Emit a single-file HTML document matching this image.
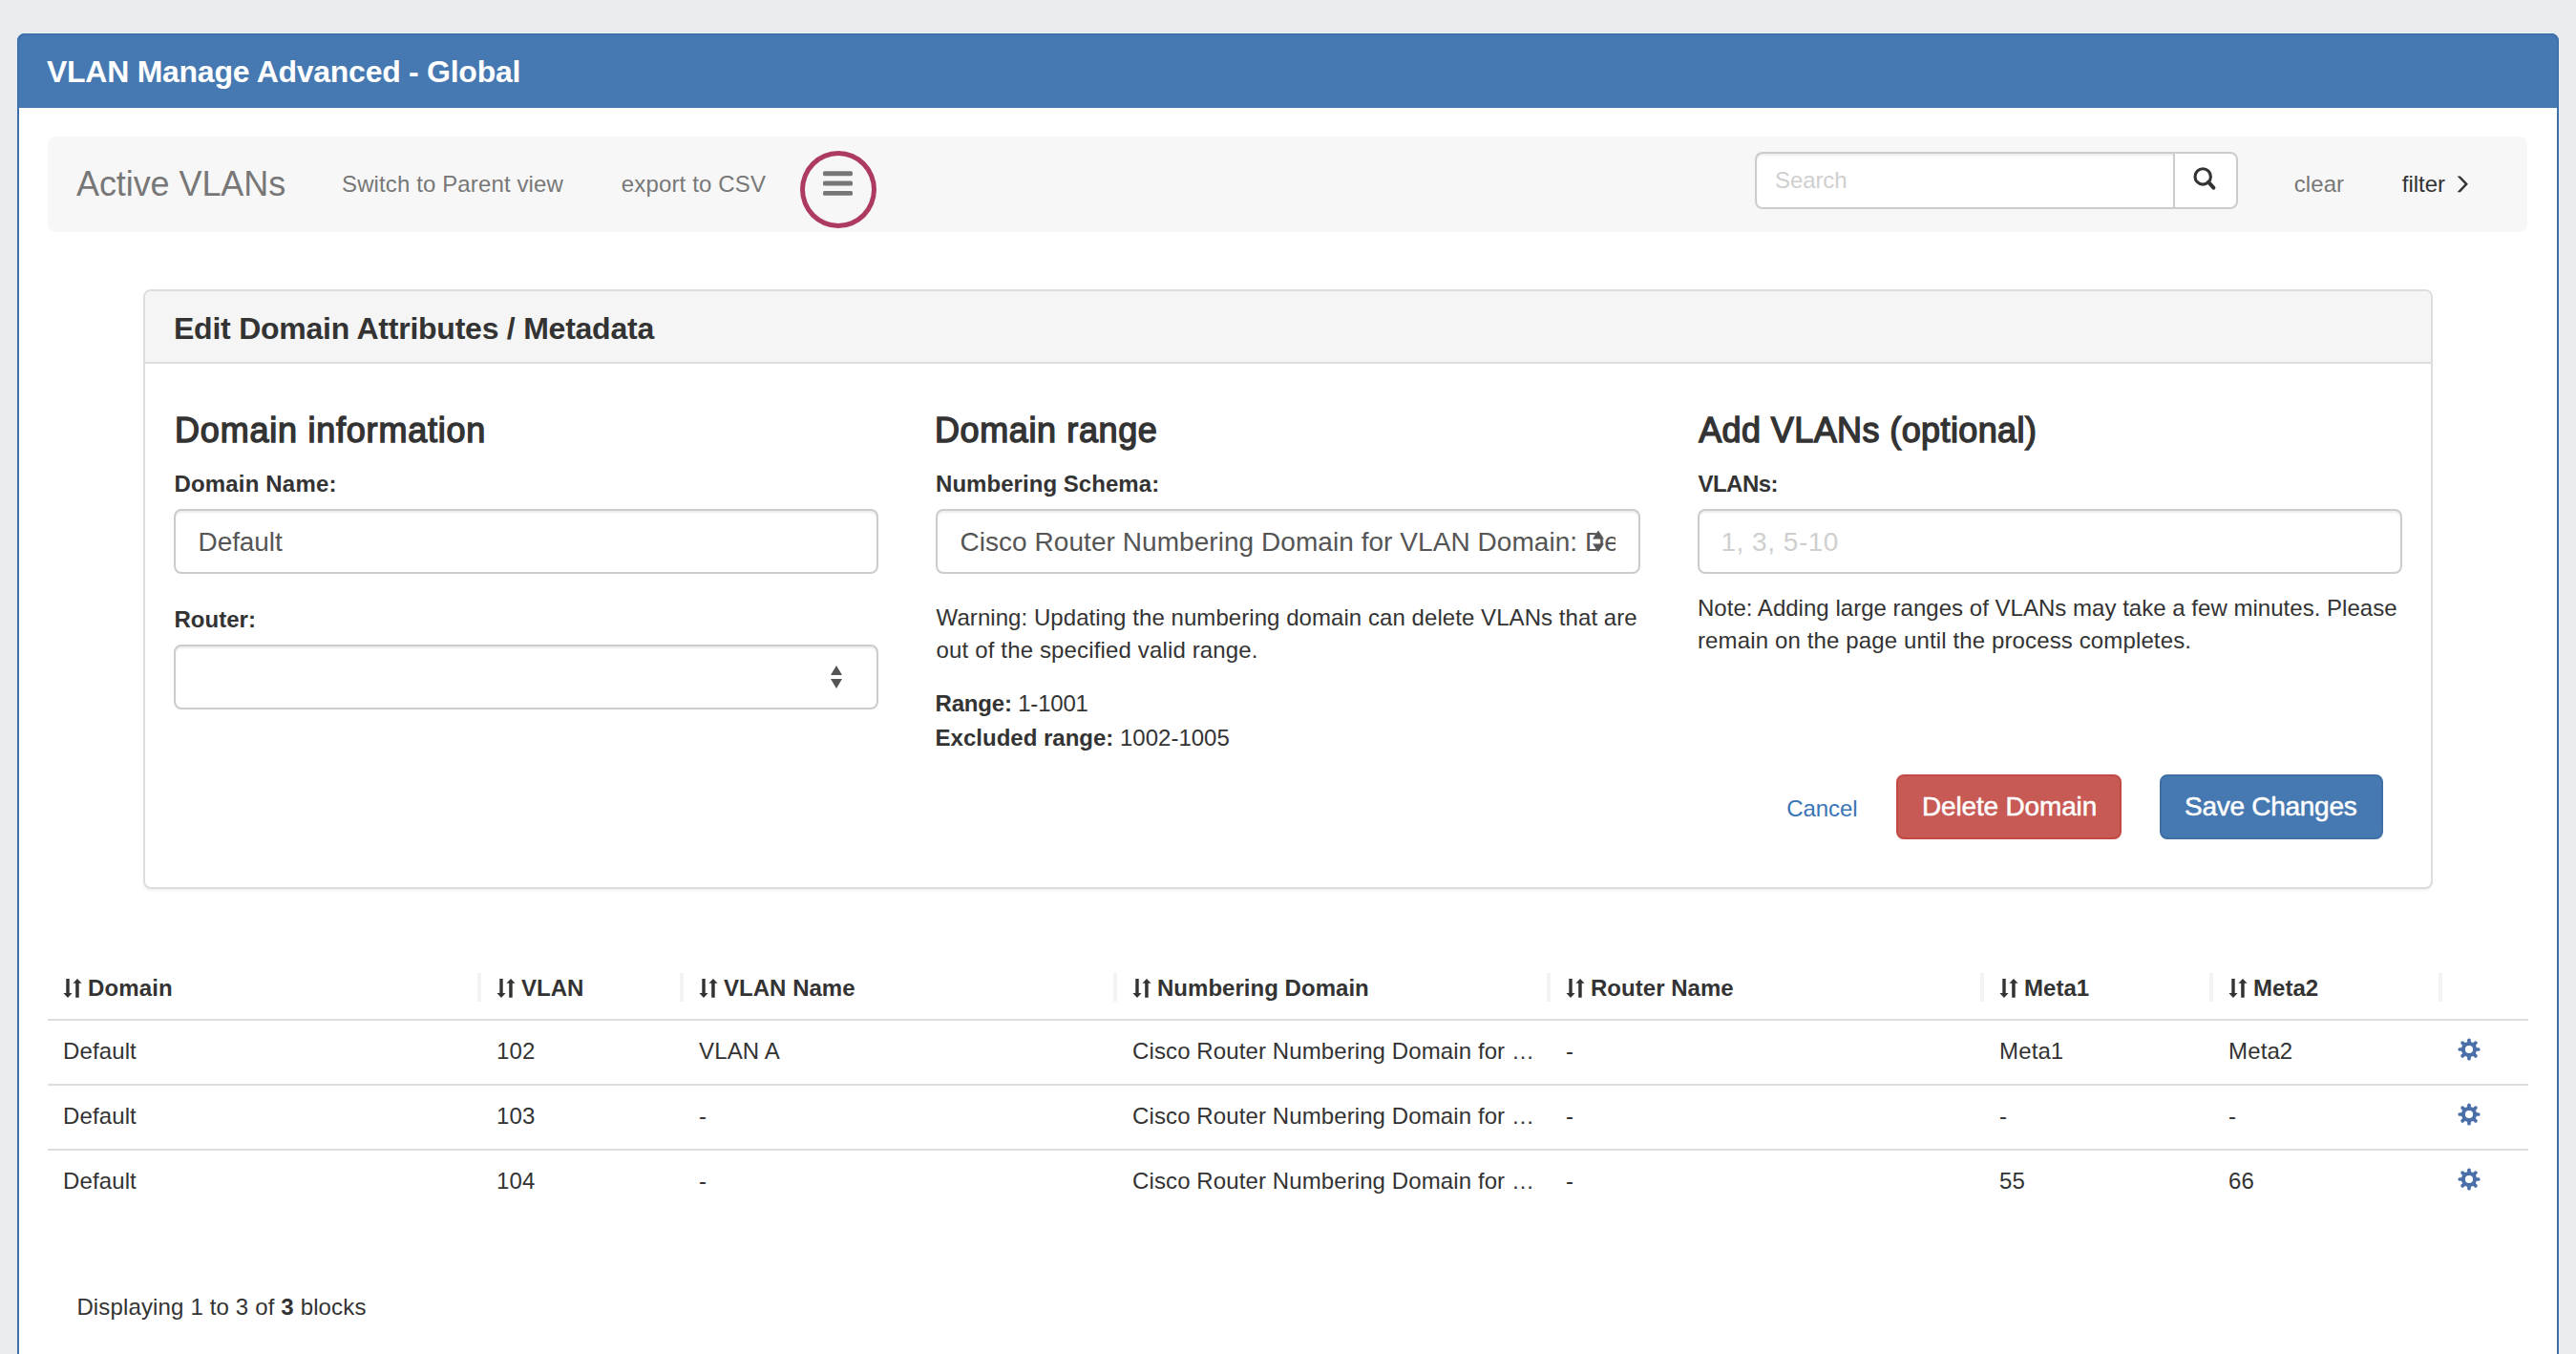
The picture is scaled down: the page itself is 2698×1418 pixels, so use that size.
<!DOCTYPE html>
<html>
<head>
<meta charset="utf-8">
<style>
*{box-sizing:border-box;margin:0;padding:0}
html,body{width:2698px;height:1418px;overflow:hidden}
body{background:#e9ecef;font-family:"Liberation Sans",sans-serif;color:#333;position:relative}
.a{position:absolute;white-space:nowrap}
.b{position:absolute}
b{font-weight:700}
</style>
</head>
<body>
<div class="b" style="left:18px;top:35px;width:2662px;height:1465px;background:#fff;border:2px solid #3e70ab;border-radius:8px;"></div>
<div class="b" style="left:18px;top:35px;width:2662px;height:78px;background:#4679b2;border:2px solid #3e70ab;border-bottom:none;border-radius:8px 8px 0 0;"></div>
<div id="title" class="a" style="left:49.00px;top:56.31px;font-size:32px;line-height:38px;font-weight:700;color:#fff;letter-spacing:-0.266px;">VLAN Manage Advanced - Global</div>
<div class="b" style="left:50px;top:143px;width:2597px;height:100px;background:#f7f7f7;border-radius:8px;"></div>
<div id="active" class="a" style="left:80.00px;top:171.03px;font-size:36px;line-height:43px;color:#777;letter-spacing:-0.079px;">Active VLANs</div>
<div id="switch" class="a" style="left:358.00px;top:178.18px;font-size:24px;line-height:29px;color:#777;letter-spacing:0.120px;">Switch to Parent view</div>
<div id="export" class="a" style="left:650.80px;top:177.78px;font-size:24px;line-height:29px;color:#777;letter-spacing:0.145px;">export to CSV</div>
<div class="b" style="left:838px;top:158px;width:80px;height:81px;border:5px solid #ad3a5f;border-radius:50%;"></div>
<svg class="b" style="left:850px;top:170px" width="55" height="45" viewBox="0 0 55 45"><g fill="#777"><rect x="12" y="9.2" width="31" height="5" rx="1.6"/><rect x="12" y="19.5" width="31" height="5.1" rx="1.6"/><rect x="12" y="29.9" width="31" height="4.9" rx="1.6"/></g></svg>
<div class="b" style="left:1838px;top:159px;width:440px;height:60px;background:#fff;border:2px solid #ccc;border-right:none;border-radius:8px 0 0 8px;box-shadow:inset 0 2px 2px rgba(0,0,0,.075);"></div>
<div class="b" style="left:2276px;top:159px;width:68px;height:60px;background:#fff;border:2px solid #ccc;border-radius:0 8px 8px 0;"></div>
<div id="search" class="a" style="left:1859.00px;top:174.18px;font-size:24px;line-height:29px;color:#cfcfcf;letter-spacing:-0.100px;">Search</div>
<svg class="b" style="left:2294px;top:173px" width="30" height="30" viewBox="0 0 30 30"><circle cx="13.2" cy="11.9" r="8.2" fill="none" stroke="#333" stroke-width="3.1"/><path d="M19 17.7 L24.4 23.7" stroke="#333" stroke-width="4" stroke-linecap="round"/></svg>
<div id="clear" class="a" style="left:2402.80px;top:178.48px;font-size:24px;line-height:29px;color:#777;letter-spacing:0.070px;">clear</div>
<div id="filter" class="a" style="left:2515.80px;top:178.48px;font-size:24px;line-height:29px;letter-spacing:-0.040px;">filter</div>
<svg class="b" style="left:2560px;top:175px" width="40" height="35" viewBox="0 0 40 35"><path d="M13.6 9.6 H16.9 L24.9 17.8 L16.9 26.2 H13.6 L21.5 17.8 Z" fill="#333"/></svg>
<div class="b" style="left:150px;top:303px;width:2398px;height:628px;background:#fff;border:2px solid #ddd;border-radius:8px;box-shadow:0 2px 2px rgba(0,0,0,.05);"></div>
<div class="b" style="left:152px;top:305px;width:2394px;height:76px;background:#f5f5f5;border-bottom:2px solid #ddd;border-radius:6px 6px 0 0;"></div>
<div id="edit" class="a" style="left:182.00px;top:324.91px;font-size:32px;line-height:38px;font-weight:700;letter-spacing:-0.240px;">Edit Domain Attributes / Metadata</div>
<div id="h1" class="a" style="left:183.10px;top:428.83px;font-size:36px;line-height:43px;letter-spacing:0.767px;-webkit-text-stroke:1.4px #333;">Domain information</div>
<div id="h2" class="a" style="left:979.00px;top:428.83px;font-size:36px;line-height:43px;letter-spacing:0.610px;-webkit-text-stroke:1.4px #333;">Domain range</div>
<div id="h3" class="a" style="left:1779.20px;top:429.03px;font-size:36px;line-height:43px;letter-spacing:0.397px;-webkit-text-stroke:1.4px #333;">Add VLANs (optional)</div>
<div id="l1" class="a" style="left:182.40px;top:492.18px;font-size:24px;line-height:29px;font-weight:700;letter-spacing:0.183px;">Domain Name:</div>
<div id="l2" class="a" style="left:980.00px;top:492.18px;font-size:24px;line-height:29px;font-weight:700;letter-spacing:0.047px;">Numbering Schema:</div>
<div id="l3" class="a" style="left:1778.40px;top:492.18px;font-size:24px;line-height:29px;font-weight:700;letter-spacing:-0.500px;">VLANs:</div>
<div class="b" style="left:182px;top:533px;width:738px;height:68px;background:#fff;border:2px solid #ccc;border-radius:8px;box-shadow:inset 0 2px 2px rgba(0,0,0,.075);"></div>
<div class="b" style="left:980px;top:533px;width:738px;height:68px;background:#fff;border:2px solid #ccc;border-radius:8px;box-shadow:inset 0 2px 2px rgba(0,0,0,.075);"></div>
<div class="b" style="left:1778px;top:533px;width:738px;height:68px;background:#fff;border:2px solid #ccc;border-radius:8px;box-shadow:inset 0 2px 2px rgba(0,0,0,.075);"></div>
<div id="inp1" class="a" style="left:207.60px;top:550.50px;font-size:28px;line-height:34px;color:#555;letter-spacing:-0.101px;">Default</div>
<div class="b" style="left:1006px;top:540px;width:686px;height:54px;overflow:hidden"><div id="inp2" class="a" style="left:-0.60px;top:10.50px;font-size:28px;line-height:34px;color:#555;letter-spacing:0.055px;">Cisco Router Numbering Domain for VLAN Domain: Default</div>
</div>
<svg class="b" style="left:1666px;top:554px" width="16" height="26" viewBox="0 0 16 26"><path d="M8 1.5 L14 10.5 L2 10.5 Z M2 15.5 L14 15.5 L8 24 Z" fill="#555"/></svg>
<div id="inp3" class="a" style="left:1802.40px;top:550.50px;font-size:28px;line-height:34px;color:#cfcfcf;letter-spacing:0.522px;">1, 3, 5-10</div>
<div id="l4" class="a" style="left:182.40px;top:634.08px;font-size:24px;line-height:29px;font-weight:700;letter-spacing:0.032px;">Router:</div>
<div class="b" style="left:182px;top:675px;width:738px;height:68px;background:#fff;border:2px solid #ccc;border-radius:8px;box-shadow:inset 0 2px 2px rgba(0,0,0,.075);"></div>
<svg class="b" style="left:868px;top:695px" width="16" height="28" viewBox="0 0 16 28"><path d="M8 2 L14 12 L2 12 Z M2 16 L14 16 L8 26 Z" fill="#555"/></svg>
<div id="w1" class="a" style="left:980.60px;top:632.38px;font-size:24px;line-height:29px;letter-spacing:0.061px;">Warning: Updating the numbering domain can delete VLANs that are</div>
<div id="w2" class="a" style="left:980.60px;top:665.98px;font-size:24px;line-height:29px;letter-spacing:0.146px;">out of the specified valid range.</div>
<div id="rng" class="a" style="left:979.60px;top:722.18px;font-size:24px;line-height:29px;letter-spacing:-0.200px;"><b>Range:</b> 1-1001</div>
<div id="exc" class="a" style="left:979.60px;top:757.88px;font-size:24px;line-height:29px;letter-spacing:0.002px;"><b>Excluded range:</b> 1002-1005</div>
<div id="n1" class="a" style="left:1778.00px;top:621.88px;font-size:24px;line-height:29px;letter-spacing:0.023px;">Note: Adding large ranges of VLANs may take a few minutes. Please</div>
<div id="n2" class="a" style="left:1778.00px;top:655.88px;font-size:24px;line-height:29px;letter-spacing:0.130px;">remain on the page until the process completes.</div>
<div id="cancel" class="a" style="left:1871.20px;top:831.88px;font-size:24px;line-height:29px;color:#3a75b6;letter-spacing:-0.040px;">Cancel</div>
<div class="b" style="left:1986px;top:811px;width:236px;height:68px;background:#c85a55;border:2px solid #c14a45;border-radius:8px;"></div>
<div id="del" class="a" style="left:2013.00px;top:828.40px;font-size:28px;line-height:34px;color:#fff;letter-spacing:-0.166px;-webkit-text-stroke:0.5px #fff;">Delete Domain</div>
<div class="b" style="left:2262px;top:811px;width:234px;height:68px;background:#4679b2;border:2px solid #3f6fa5;border-radius:8px;"></div>
<div id="save" class="a" style="left:2288.00px;top:828.40px;font-size:28px;line-height:34px;color:#fff;letter-spacing:-0.273px;-webkit-text-stroke:0.5px #fff;">Save Changes</div>
<svg class="b" style="left:66px;top:1025px" width="20" height="20" viewBox="0 0 20 20"><path d="M3.3 0 H6.7 V15.1 H9.6 L5 19.9 L0.4 15.1 H3.3 Z M13.2 19.8 H16.7 V4.8 H19.6 L15 0 L10.4 4.8 H13.2 Z" fill="#333"/></svg>
<div id="hd0" class="a" style="left:92.10px;top:1020.28px;font-size:24px;line-height:29px;font-weight:700;letter-spacing:0.100px;">Domain</div>
<div class="b" style="left:500px;top:1019px;width:4px;height:30px;background:#f3f3f3;"></div>
<svg class="b" style="left:520px;top:1025px" width="20" height="20" viewBox="0 0 20 20"><path d="M3.3 0 H6.7 V15.1 H9.6 L5 19.9 L0.4 15.1 H3.3 Z M13.2 19.8 H16.7 V4.8 H19.6 L15 0 L10.4 4.8 H13.2 Z" fill="#333"/></svg>
<div id="t1" class="a" style="left:546.00px;top:1020.28px;font-size:24px;line-height:29px;font-weight:700;letter-spacing:0.027px;">VLAN</div>
<div class="b" style="left:712px;top:1019px;width:4px;height:30px;background:#f3f3f3;"></div>
<svg class="b" style="left:732px;top:1025px" width="20" height="20" viewBox="0 0 20 20"><path d="M3.3 0 H6.7 V15.1 H9.6 L5 19.9 L0.4 15.1 H3.3 Z M13.2 19.8 H16.7 V4.8 H19.6 L15 0 L10.4 4.8 H13.2 Z" fill="#333"/></svg>
<div id="t2" class="a" style="left:758.00px;top:1020.28px;font-size:24px;line-height:29px;font-weight:700;letter-spacing:0.027px;">VLAN Name</div>
<div class="b" style="left:1166px;top:1019px;width:4px;height:30px;background:#f3f3f3;"></div>
<svg class="b" style="left:1186px;top:1025px" width="20" height="20" viewBox="0 0 20 20"><path d="M3.3 0 H6.7 V15.1 H9.6 L5 19.9 L0.4 15.1 H3.3 Z M13.2 19.8 H16.7 V4.8 H19.6 L15 0 L10.4 4.8 H13.2 Z" fill="#333"/></svg>
<div id="hd3" class="a" style="left:1212.00px;top:1020.28px;font-size:24px;line-height:29px;font-weight:700;letter-spacing:0.027px;">Numbering Domain</div>
<div class="b" style="left:1620px;top:1019px;width:4px;height:30px;background:#f3f3f3;"></div>
<svg class="b" style="left:1640px;top:1025px" width="20" height="20" viewBox="0 0 20 20"><path d="M3.3 0 H6.7 V15.1 H9.6 L5 19.9 L0.4 15.1 H3.3 Z M13.2 19.8 H16.7 V4.8 H19.6 L15 0 L10.4 4.8 H13.2 Z" fill="#333"/></svg>
<div id="t3" class="a" style="left:1666.00px;top:1020.28px;font-size:24px;line-height:29px;font-weight:700;letter-spacing:0.027px;">Router Name</div>
<div class="b" style="left:2074px;top:1019px;width:4px;height:30px;background:#f3f3f3;"></div>
<svg class="b" style="left:2094px;top:1025px" width="20" height="20" viewBox="0 0 20 20"><path d="M3.3 0 H6.7 V15.1 H9.6 L5 19.9 L0.4 15.1 H3.3 Z M13.2 19.8 H16.7 V4.8 H19.6 L15 0 L10.4 4.8 H13.2 Z" fill="#333"/></svg>
<div id="t4" class="a" style="left:2120.00px;top:1020.28px;font-size:24px;line-height:29px;font-weight:700;letter-spacing:0.027px;">Meta1</div>
<div class="b" style="left:2314px;top:1019px;width:4px;height:30px;background:#f3f3f3;"></div>
<svg class="b" style="left:2334px;top:1025px" width="20" height="20" viewBox="0 0 20 20"><path d="M3.3 0 H6.7 V15.1 H9.6 L5 19.9 L0.4 15.1 H3.3 Z M13.2 19.8 H16.7 V4.8 H19.6 L15 0 L10.4 4.8 H13.2 Z" fill="#333"/></svg>
<div id="t5" class="a" style="left:2360.00px;top:1020.28px;font-size:24px;line-height:29px;font-weight:700;letter-spacing:0.027px;">Meta2</div>
<div class="b" style="left:2554px;top:1019px;width:4px;height:30px;background:#f3f3f3;"></div>
<div class="b" style="left:2554px;top:1019px;width:4px;height:30px;background:#f3f3f3;"></div>
<div class="b" style="left:50px;top:1067px;width:2598px;height:2px;background:#ddd;"></div>
<div id="t6" class="a" style="left:66.10px;top:1086.08px;font-size:24px;line-height:29px;letter-spacing:0.100px;">Default</div>
<div id="t7" class="a" style="left:520.10px;top:1086.08px;font-size:24px;line-height:29px;letter-spacing:0.100px;">102</div>
<div id="t8" class="a" style="left:732.10px;top:1086.08px;font-size:24px;line-height:29px;letter-spacing:0.100px;">VLAN A</div>
<div id="cisco" class="a" style="left:1186.10px;top:1086.08px;font-size:24px;line-height:29px;letter-spacing:0.100px;">Cisco Router Numbering Domain for …</div>
<div id="t9" class="a" style="left:1640.10px;top:1086.08px;font-size:24px;line-height:29px;letter-spacing:0.100px;">-</div>
<div id="t10" class="a" style="left:2094.10px;top:1086.08px;font-size:24px;line-height:29px;letter-spacing:0.100px;">Meta1</div>
<div id="t11" class="a" style="left:2334.10px;top:1086.08px;font-size:24px;line-height:29px;letter-spacing:0.100px;">Meta2</div>
<svg class="b" style="left:2574px;top:1087px" width="24" height="24" viewBox="-12 -12 24 24"><g fill="#4a6ea8"><rect x="-1.85" y="-11.6" width="3.7" height="6" rx="1.85" transform="rotate(0)"/><rect x="-1.85" y="-11.6" width="3.7" height="6" rx="1.85" transform="rotate(45)"/><rect x="-1.85" y="-11.6" width="3.7" height="6" rx="1.85" transform="rotate(90)"/><rect x="-1.85" y="-11.6" width="3.7" height="6" rx="1.85" transform="rotate(135)"/><rect x="-1.85" y="-11.6" width="3.7" height="6" rx="1.85" transform="rotate(180)"/><rect x="-1.85" y="-11.6" width="3.7" height="6" rx="1.85" transform="rotate(225)"/><rect x="-1.85" y="-11.6" width="3.7" height="6" rx="1.85" transform="rotate(270)"/><rect x="-1.85" y="-11.6" width="3.7" height="6" rx="1.85" transform="rotate(315)"/></g><circle r="8.1" fill="#4a6ea8"/><circle r="4.1" fill="#fff"/></svg>
<div class="b" style="left:50px;top:1135px;width:2598px;height:2px;background:#ddd;"></div>
<div id="t12" class="a" style="left:66.10px;top:1154.08px;font-size:24px;line-height:29px;letter-spacing:0.100px;">Default</div>
<div id="t13" class="a" style="left:520.10px;top:1154.08px;font-size:24px;line-height:29px;letter-spacing:0.100px;">103</div>
<div id="t14" class="a" style="left:732.10px;top:1154.08px;font-size:24px;line-height:29px;letter-spacing:0.100px;">-</div>
<div id="t15" class="a" style="left:1186.10px;top:1154.08px;font-size:24px;line-height:29px;letter-spacing:0.100px;">Cisco Router Numbering Domain for …</div>
<div id="t16" class="a" style="left:1640.10px;top:1154.08px;font-size:24px;line-height:29px;letter-spacing:0.100px;">-</div>
<div id="t17" class="a" style="left:2094.10px;top:1154.08px;font-size:24px;line-height:29px;letter-spacing:0.100px;">-</div>
<div id="t18" class="a" style="left:2334.10px;top:1154.08px;font-size:24px;line-height:29px;letter-spacing:0.100px;">-</div>
<svg class="b" style="left:2574px;top:1155px" width="24" height="24" viewBox="-12 -12 24 24"><g fill="#4a6ea8"><rect x="-1.85" y="-11.6" width="3.7" height="6" rx="1.85" transform="rotate(0)"/><rect x="-1.85" y="-11.6" width="3.7" height="6" rx="1.85" transform="rotate(45)"/><rect x="-1.85" y="-11.6" width="3.7" height="6" rx="1.85" transform="rotate(90)"/><rect x="-1.85" y="-11.6" width="3.7" height="6" rx="1.85" transform="rotate(135)"/><rect x="-1.85" y="-11.6" width="3.7" height="6" rx="1.85" transform="rotate(180)"/><rect x="-1.85" y="-11.6" width="3.7" height="6" rx="1.85" transform="rotate(225)"/><rect x="-1.85" y="-11.6" width="3.7" height="6" rx="1.85" transform="rotate(270)"/><rect x="-1.85" y="-11.6" width="3.7" height="6" rx="1.85" transform="rotate(315)"/></g><circle r="8.1" fill="#4a6ea8"/><circle r="4.1" fill="#fff"/></svg>
<div class="b" style="left:50px;top:1203px;width:2598px;height:2px;background:#ddd;"></div>
<div id="t19" class="a" style="left:66.10px;top:1222.08px;font-size:24px;line-height:29px;letter-spacing:0.100px;">Default</div>
<div id="t20" class="a" style="left:520.10px;top:1222.08px;font-size:24px;line-height:29px;letter-spacing:0.100px;">104</div>
<div id="t21" class="a" style="left:732.10px;top:1222.08px;font-size:24px;line-height:29px;letter-spacing:0.100px;">-</div>
<div id="t22" class="a" style="left:1186.10px;top:1222.08px;font-size:24px;line-height:29px;letter-spacing:0.100px;">Cisco Router Numbering Domain for …</div>
<div id="t23" class="a" style="left:1640.10px;top:1222.08px;font-size:24px;line-height:29px;letter-spacing:0.100px;">-</div>
<div id="t24" class="a" style="left:2094.10px;top:1222.08px;font-size:24px;line-height:29px;letter-spacing:0.100px;">55</div>
<div id="t25" class="a" style="left:2334.10px;top:1222.08px;font-size:24px;line-height:29px;letter-spacing:0.100px;">66</div>
<svg class="b" style="left:2574px;top:1223px" width="24" height="24" viewBox="-12 -12 24 24"><g fill="#4a6ea8"><rect x="-1.85" y="-11.6" width="3.7" height="6" rx="1.85" transform="rotate(0)"/><rect x="-1.85" y="-11.6" width="3.7" height="6" rx="1.85" transform="rotate(45)"/><rect x="-1.85" y="-11.6" width="3.7" height="6" rx="1.85" transform="rotate(90)"/><rect x="-1.85" y="-11.6" width="3.7" height="6" rx="1.85" transform="rotate(135)"/><rect x="-1.85" y="-11.6" width="3.7" height="6" rx="1.85" transform="rotate(180)"/><rect x="-1.85" y="-11.6" width="3.7" height="6" rx="1.85" transform="rotate(225)"/><rect x="-1.85" y="-11.6" width="3.7" height="6" rx="1.85" transform="rotate(270)"/><rect x="-1.85" y="-11.6" width="3.7" height="6" rx="1.85" transform="rotate(315)"/></g><circle r="8.1" fill="#4a6ea8"/><circle r="4.1" fill="#fff"/></svg>
<div id="disp" class="a" style="left:80.40px;top:1354.08px;font-size:24px;line-height:29px;letter-spacing:0.149px;">Displaying 1 to 3 of <b>3</b> blocks</div>
</body>
</html>
